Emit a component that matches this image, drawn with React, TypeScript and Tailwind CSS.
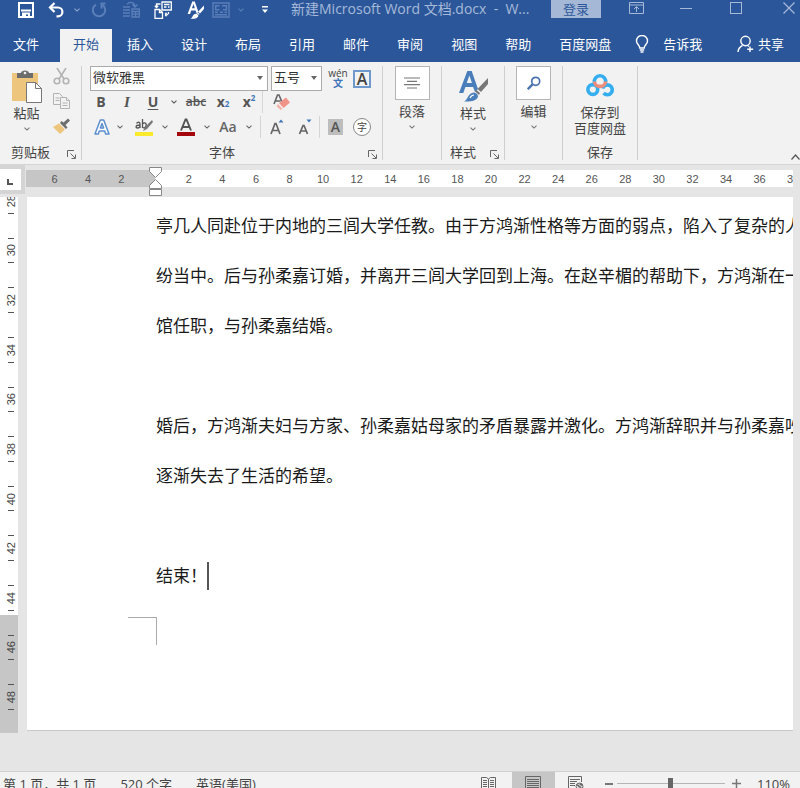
import type { ReactNode } from "react";
import clsx from "clsx";

const TABS = ["插入", "设计", "布局", "引用", "邮件", "审阅", "视图", "帮助", "百度网盘"];

const LEFT_MARKS = [6, 4, 2];
const RIGHT_MARKS = Array.from({ length: 19 }, (_, i) => (i + 1) * 2);
const SIDE_MARKS = Array.from({ length: 11 }, (_, i) => 28 + i * 2);

const LINES = [
  "亭几人同赴位于内地的三闾大学任教。由于方鸿渐性格等方面的弱点，陷入了复杂的人际",
  "纷当中。后与孙柔嘉订婚，并离开三闾大学回到上海。在赵辛楣的帮助下，方鸿渐在一家",
  "馆任职，与孙柔嘉结婚。",
  "",
  "婚后，方鸿渐夫妇与方家、孙柔嘉姑母家的矛盾暴露并激化。方鸿渐辞职并与孙柔嘉吵",
  "逐渐失去了生活的希望。",
  "",
];

function Chevron({ className }: { className?: string }) {
  return (
    <svg viewBox="0 0 6 4" className={clsx("h-1 w-1.5 shrink-0", className)} fill="none" stroke="currentColor" strokeWidth="1.1">
      <path d="M.5 .7 3 3.1 5.5 .7" />
    </svg>
  );
}

function Icon({ label, className, children }: { label: string; className?: string; children: ReactNode }) {
  return (
    <button type="button" aria-label={label} className={clsx("flex shrink-0 items-center justify-center", className)}>
      {children}
    </button>
  );
}

function BrushA({ className, letter, brush }: { className?: string; letter: string; brush: string }) {
  return (
    <svg viewBox="0 0 30 32" className={className}>
      <path d="M1 23 9.300 1h4.400L20 19l-3 3-1.900-5H7.400l-2.100 6zM8.700 13h5.200L11.400 5.500z" fill={letter} />
      <path d="M30 8v6l-7 8-3.500-3z" fill={brush} />
      <path d="m18.500 20 3.500 3-1 2-4-3.500z" fill={brush} />
      <path d="M16 22.500c2 .2 4 2 4 4-1 4.500-8 5.500-14 5 4-1.500 3.500-8.500 10-9z" fill={letter} />
      <path d="M12 28c1-2 2-3 4-3" stroke="#fff" strokeWidth="1.200" fill="none" />
    </svg>
  );
}

function TitleBar() {
  return (
    <header className="flex h-[29px] shrink-0 items-start text-white">
      <div className="flex h-[19px] items-center pl-2.5">
        <Icon label="保存" className="w-8">
          <svg viewBox="0 0 16 16" className="size-4" fill="none" stroke="currentColor" strokeWidth="2">
            <path d="M1 1h14v14H1z" />
            <path d="M3 8.500h10" />
            <path d="M5 15v-3.500h6V15" />
            <path d="M7 12v3" />
          </svg>
        </Icon>
        <Icon label="撤消" className="w-7">
          <svg viewBox="0 0 16 16" className="size-4" fill="none" stroke="currentColor" strokeWidth="2.200">
            <path d="M6.500 1 2 5.500 6.500 10" />
            <path d="M2 5.500h8a4.200 4.200 0 0 1 0 8.800H8.500" />
          </svg>
        </Icon>
        <Icon label="撤消选项" className="w-[13px] text-[#8fa8d0]">
          <Chevron />
        </Icon>
        <Icon label="重复" className="w-8 text-[#5a7fb9]">
          <svg viewBox="0 0 16 16" className="size-4" fill="none" stroke="currentColor" strokeWidth="2">
            <path d="M5 2.600a6.200 6.200 0 1 0 6.500.3" />
            <path d="M14.500 1.500h-4v5" />
          </svg>
        </Icon>
        <Icon label="粘贴列表" className="w-8 text-[#5a7fb9]">
          <svg viewBox="0 0 17 17" className="size-[17px]" fill="none" stroke="currentColor" strokeWidth="1.300">
            <path d="M4 3.500C6 .5 11 .5 12 5M9.500 3.500 12 6l2.500-2.500" />
            <path d="M0 6h7M0 9h7M0 12h7M0 15h7" />
            <path d="M9 8h7.300v8H9zM9 10.500h7M12.600 10.500V16M9 13.200h7" />
          </svg>
        </Icon>
        <Icon label="切换窗口" className="w-8">
          <svg viewBox="0 0 18 18" className="size-[18px]" fill="none" stroke="currentColor" strokeWidth="1.300">
            <path d="M1 8.500h4.500l3 3V17.300H1z" />
            <path d="M5.500 8.500V11.500h3" />
            <path d="M8 1h9.300v8H8z" />
            <path d="M10 3.500h5.500M10 6h2.500M14 6h1.500" />
            <path d="M6.500 3H2.500v3M.8 4.700l1.700 1.800 1.700-1.800" />
            <path d="M14.500 11v2.500h-3.500M12.500 11.800 10.800 13.500l1.700 1.700" strokeDasharray="2 .8" />
          </svg>
        </Icon>
        <Icon label="样式" className="w-8">
          <BrushA letter="#fff" brush="#fff" className="h-[18px] w-[17px]" />
        </Icon>
        <Icon label="图片" className="w-5 text-[#5a7fb9]">
          <svg viewBox="0 0 18 16" className="h-4 w-[18px]" fill="none" stroke="currentColor" strokeWidth="1.400">
            <path d="M1 1h16v14H1z" />
            <path d="M7.500 3.700H3.700v4H7.500M10 3.700h4.500v4H11M3 10.300h3M8 10.300h3M12.500 10.300H15M3 12.800h12" />
          </svg>
        </Icon>
        <Icon label="图片选项" className="w-5 text-[#5a7fb9]">
          <Chevron />
        </Icon>
        <Icon label="自定义快速访问工具栏" className="w-7">
          <svg viewBox="0 0 8 8" className="size-2" fill="currentColor">
            <path d="M1 0h6v1.500H1zM1 3.500h6L4 7z" />
          </svg>
        </Icon>
      </div>
      <h1 className="min-w-0 flex-1 truncate pl-3 text-[14px] leading-[18px] whitespace-pre text-[#a6b9d9]">
        新建Microsoft Word 文档.docx  -  W...
      </h1>
      <button type="button" className="h-[18px] w-[50px] bg-[#a5b8d6] text-[13px] leading-4 text-[#2b579a]">
        登录
      </button>
      <div className="flex h-4 items-center pl-2.5 text-[#a6b9d9]">
        <Icon label="功能区显示选项" className="w-[50px]">
          <svg viewBox="0 0 15 12" className="h-3 w-[15px]" fill="none" stroke="currentColor">
            <path d="M.5 .5h14v11H.5zM.5 3h14M7.500 10V5M5 7l2.500-2.500L10 7" />
          </svg>
        </Icon>
        <Icon label="最小化" className="w-[50px]">
          <span className="h-px w-3 bg-current" />
        </Icon>
        <Icon label="最大化" className="w-[50px]">
          <span className="size-3 border border-current" />
        </Icon>
        <Icon label="关闭" className="w-[39px] pl-4">
          <svg viewBox="0 0 12 12" className="size-3" fill="none" stroke="currentColor" strokeWidth="1.200">
            <path d="m.5 .5 11 11M11.500 .5l-11 11" />
          </svg>
        </Icon>
      </div>
    </header>
  );
}

function Tabs() {
  return (
    <nav className="flex h-[33px] shrink-0 items-stretch text-[13px] leading-5 text-white">
      <button type="button" className="mr-2 px-[13px] pb-1">
        文件
      </button>
      <div className="flex gap-0.5">
        <button type="button" className="bg-[#f2f2f2] px-[13px] pb-1 text-[#2b579a]">
          开始
        </button>
        {TABS.map((tab) => (
          <button type="button" key={tab} className="px-[13px] pb-1">
            {tab}
          </button>
        ))}
      </div>
      <button type="button" className="flex items-center gap-3.5 pb-1 pl-[11px]">
        <svg viewBox="0 0 14 18" className="h-[18px] w-3.5" fill="none" stroke="currentColor" strokeWidth="1.400">
          <path d="M4.800 13c0-3-3.300-3.500-3.300-7a5.500 5.500 0 0 1 11 0c0 3.500-3.300 4-3.300 7z" />
          <path d="M4.800 15h4.400M5.500 17h3" />
        </svg>
        告诉我
      </button>
      <button type="button" className="ml-auto flex items-center gap-1 pr-4 pb-1">
        <svg viewBox="0 0 17 18" className="h-[18px] w-[17px]" fill="none" stroke="currentColor" strokeWidth="1.400">
          <circle cx="8.500" cy="6" r="4.700" />
          <path d="M1 17c.2-3.500 2-5.300 4.500-6.700M10.500 10.500l1.500 1M13 11.500v5.500M10.200 14.300h6" />
        </svg>
        共享
      </button>
    </nav>
  );
}

function Group({ label, width, launcher, children }: { label?: string; width: string; launcher?: boolean; children: ReactNode }) {
  return (
    <section className={clsx("flex shrink-0 flex-col border-r border-[#cfcfcf]", width)}>
      <div className="flex flex-1 flex-col">{children}</div>
      <footer className="flex h-[15px] items-center">
        <span className="flex-1 text-center leading-[15px] whitespace-nowrap">{label}</span>
        {launcher && (
          <Icon label={`${label}设置`} className="w-5 pt-1">
            <svg viewBox="0 0 9 9" className="size-[9px]" fill="none" stroke="#666">
              <path d="M.5 7V.5H7M3.500 3.500 8 8M8.500 4.500v4h-4" />
            </svg>
          </Icon>
        )}
      </footer>
    </section>
  );
}

function ClipboardGroup() {
  return (
    <Group label="剪贴板" width="w-[82px]" launcher>
      <div className="flex justify-between pr-[11px] pl-[11px]">
        <button type="button" className="flex flex-col items-center pt-1">
          <svg viewBox="0 0 31 33" className="h-[33px] w-[31px]">
            <path d="M1 3h26v28H1z" fill="#eec57c" />
            <path d="M6 3h4c0-3.500 8-3.500 8 0h4v5H6z" fill="#6d6d6d" />
            <circle cx="14" cy="3" r="1.300" fill="#f2f2f2" />
            <path d="M15.500 12.500h9l6 6v14h-15z" fill="#fff" stroke="#777" />
            <path d="M24.500 12.500v6h6" fill="none" stroke="#777" />
          </svg>
          <span className="leading-5">粘贴</span>
          <Chevron className="mt-1 text-[#777]" />
        </button>
        <div className="flex flex-col gap-2 pt-0.5">
          <Icon label="剪切" className="h-[17px]">
            <svg viewBox="0 0 17 17" className="size-[17px]" fill="none" stroke="#b3b3b3" strokeWidth="1.600">
              <path d="M4 0l7 11M13 0 6 11" />
              <circle cx="4" cy="13" r="2.800" />
              <circle cx="13" cy="13" r="2.800" />
            </svg>
          </Icon>
          <Icon label="复制" className="h-[17px]">
            <svg viewBox="0 0 17 17" className="size-[17px]" fill="#f2f2f2" stroke="#b3b3b3">
              <path d="M.5 .5h6l3 3v8h-9z" />
              <path d="M2.500 5h4M2.500 7.500h4" />
              <path d="M7.500 4.500h6l3 3v8h-9z" />
              <path d="M13.500 4.500v3h3M9.500 10h5M9.500 12.500h5" />
            </svg>
          </Icon>
          <Icon label="格式刷" className="h-[17px]">
            <svg viewBox="0 0 17 17" className="size-[17px]">
              <path d="m0 9 6-3.500 6 6L7 16z" fill="#eec57c" />
              <path d="m7 5 6 6 1.500-1.500-2-2.500L17 2.500 15 .5l-4.500 4-2-1.500z" fill="#6d6d6d" />
            </svg>
          </Icon>
        </div>
      </div>
    </Group>
  );
}

function Picker({ id, label, value, width }: { id: string; label: string; value: string; width: string }) {
  return (
    <div className={clsx("relative h-[25px]", width)}>
      <label htmlFor={id} className="sr-only">
        {label}
      </label>
      <select id={id} className="size-full appearance-none border border-[#ababab] bg-white pb-1 pl-0.5 text-[13px] leading-5 text-[#333]">
        <option>{value}</option>
      </select>
      <svg viewBox="0 0 6 4" className="pointer-events-none absolute top-2.5 right-[5px] h-1 w-1.5" fill="#666">
        <path d="M0 0h6L3 4z" />
      </svg>
    </div>
  );
}

function Divider() {
  return <span className="h-[22px] w-px shrink-0 bg-[#d5d5d5]" />;
}

function FontGroup() {
  return (
    <Group label="字体" width="w-[301px]" launcher>
      <div className="flex h-[25px] items-center gap-[3px] pl-2">
        <Picker id="font" label="字体名称" value="微软雅黑" width="w-[178px]" />
        <Picker id="size" label="字号" value="五号" width="w-[51px]" />
        <Icon label="拼音指南" className="ml-0.5 h-6 w-[22px] flex-col">
          <span className="text-[10px] leading-[10px]">wén</span>
          <span className="text-[10px] leading-[11px] font-bold text-[#3e74b8]">文</span>
        </Icon>
        <Icon label="字符边框" className="ml-px size-[18px] border-2 border-[#6f98cc] text-base leading-4 font-semibold">
          A
        </Icon>
      </div>
      <div className="flex h-[22px] items-center pl-1.5 text-[14px] leading-5 font-bold text-[#555]">
        <Icon label="加粗" className="w-[26px]">B</Icon>
        <Icon label="倾斜" className="w-[26px] font-['Liberation_Serif'] text-[15px] italic">I</Icon>
        <Icon label="下划线" className="w-[26px] underline underline-offset-2">U</Icon>
        <Icon label="下划线选项" className="w-4">
          <Chevron />
        </Icon>
        <Icon label="删除线" className="w-7 text-xs font-semibold line-through">abc</Icon>
        <Icon label="下标" className="w-[26px]">
          x<sub className="text-[8px] text-[#3e74b8]">2</sub>
        </Icon>
        <Icon label="上标" className="w-[26px]">
          x<sup className="text-[8px] text-[#3e74b8]">2</sup>
        </Icon>
        <Divider />
        <Icon label="清除格式" className="w-9">
          <svg viewBox="0 0 17 17" className="size-[17px]">
            <path d="M1 10 4.500 1h1.500L9 8M2.500 7h5" fill="none" stroke="#666" strokeWidth="1.600" />
            <path d="m6 9 7-5.500 4 5-6.500 5.500z" fill="#f0948a" />
            <path d="m5 10 4.500 4.800L7.500 16 3.500 12z" fill="#f4b3aa" />
          </svg>
        </Icon>
      </div>
      <div className="flex h-7 items-center pl-2 text-[#666]">
        <Icon label="文本效果" className="w-6">
          <svg viewBox="0 0 16 16" className="size-4" fill="#fff" stroke="#5b8fce" strokeWidth="1.500" strokeLinejoin="round">
            <path d="M1 15 6.300 1h3.400L15 15h-3.300l-1-3H5.300l-1 3zM6.300 9h3.400L8 4.500z" />
          </svg>
        </Icon>
        <Icon label="文本效果选项" className="w-3">
          <Chevron />
        </Icon>
        <Icon label="突出显示" className="w-9">
          <svg viewBox="0 0 18 18" className="size-[18px]">
            <path d="M0 14h18v4H0z" fill="#fbe92e" />
            <path d="M1.500 5.500C3 3.500 5 4 5 6v4M5 7C0 7 .5 10 2.500 10 4 10 5 9 5 8M7.500 1v9M7.500 6c2-2.500 4.500-.5 3.500 2-.8 2-2.500 2.500-3.500 1" fill="none" stroke="#555" strokeWidth="1.300" />
            <path d="M17 2 10 9l-2 4 4-2 6-7z" fill="#777" />
          </svg>
        </Icon>
        <Icon label="突出显示选项" className="w-1.5">
          <Chevron />
        </Icon>
        <Icon label="字体颜色" className="w-9">
          <svg viewBox="0 0 18 18" className="size-[18px]">
            <path d="M4 12.500 8.500 1.500h1l4.500 11M5.500 9h7" fill="none" stroke="#555" strokeWidth="1.900" />
            <path d="M0 14h18v4H0z" fill="#a4070c" />
          </svg>
        </Icon>
        <Icon label="字体颜色选项" className="w-1.5">
          <Chevron />
        </Icon>
        <Icon label="更改大小写" className="w-9 text-sm font-semibold">Aa</Icon>
        <Icon label="更改大小写选项" className="mr-2 w-1.5">
          <Chevron />
        </Icon>
        <Divider />
        <Icon label="增大字号" className="w-8">
          <svg viewBox="0 0 14 16" className="h-4 w-3.5">
            <path d="M1 15 5 4.500h1L10 15M2.500 11.500h6" fill="none" stroke="#666" strokeWidth="1.700" />
            <path d="M8.500 3.500h5L11 .5z" fill="#3e74b8" />
          </svg>
        </Icon>
        <Icon label="减小字号" className="mr-0.5 w-6">
          <svg viewBox="0 0 14 16" className="h-4 w-3.5">
            <path d="M1.500 15 5 6.500h1L9.500 15M3 12h5.500" fill="none" stroke="#666" strokeWidth="1.700" />
            <path d="M8.500 .5h5L11 3.500z" fill="#3e74b8" />
          </svg>
        </Icon>
        <Divider />
        <Icon label="字符底纹" className="ml-2 h-4 w-[15px] bg-[#bdbdbd] text-sm leading-4 font-semibold text-[#555]">A</Icon>
        <Icon label="带圈字符" className="ml-2.5 size-[18px] rounded-full border border-[#888] bg-white text-[10px] leading-4 text-[#444]">字</Icon>
      </div>
    </Group>
  );
}

function BoxedButton({ label, children }: { label: string; children: ReactNode }) {
  return (
    <button type="button" className="flex flex-col items-center">
      <span className="flex h-[34px] w-[35px] items-center justify-center border border-[#b5b5b5] bg-white">{children}</span>
      <span className="mt-px leading-5">{label}</span>
      <Chevron className="mt-1 text-[#777]" />
    </button>
  );
}

function Ribbon() {
  return (
    <div className="flex h-[103px] shrink-0 border-b border-[#d5d5d5] bg-[#f2f2f2] pt-1 pb-1 text-[13px] text-[#444]">
      <ClipboardGroup />
      <FontGroup />
      <Group width="w-[59px]">
        <BoxedButton label="段落">
          <svg viewBox="0 0 16 12" className="h-3 w-4" stroke="#777" strokeWidth="1.200">
            <path d="M0 1h16M3 4.300h10M0 7.600h16M3 11h10" />
          </svg>
        </BoxedButton>
      </Group>
      <Group label="样式" width="w-[63px]" launcher>
        <button type="button" className="flex flex-col items-center pt-1">
          <BrushA letter="#4a7ebb" brush="#777" className="h-8 w-[30px]" />
          <span className="mt-px leading-5">样式</span>
          <Chevron className="mt-1 text-[#777]" />
        </button>
      </Group>
      <Group width="w-[58px]">
        <BoxedButton label="编辑">
          <svg viewBox="0 0 14 14" className="size-3.5" fill="none" stroke="#4a72b0" strokeWidth="1.700">
            <circle cx="8.700" cy="5.300" r="4" />
            <path d="M5.600 8.400 .8 13.200" strokeWidth="2.300" />
          </svg>
        </BoxedButton>
      </Group>
      <Group label="保存" width="w-[75px]">
        <button type="button" className="flex flex-col items-center pt-[7px]">
          <svg viewBox="0 0 28 24" className="h-6 w-7" fill="none" strokeWidth="3.600">
            <circle cx="6.800" cy="16.500" r="4.900" stroke="#35aef0" />
            <path d="M17.600 20a4.900 4.900 0 1 0 -1-4.500" stroke="#35aef0" />
            <path d="M8.400 9.500a5.700 5.700 0 1 1 11.200 0" stroke="#35aef0" />
            <path d="M8.400 8.500c.4 6.500 10.800 6.500 11.200 0" stroke="#ee8d7b" />
          </svg>
          <span className="mt-[7px] leading-4">
            保存到
            <br />
            百度网盘
          </span>
        </button>
      </Group>
      <div className="flex flex-1 items-end justify-end">
        <Icon label="折叠功能区">
          <svg viewBox="0 0 9 6" className="h-1.5 w-[9px]" fill="none" stroke="#555" strokeWidth="1.200">
            <path d="M.5 5.500 4.500 1l4 4.500" />
          </svg>
        </Icon>
      </div>
    </div>
  );
}

function TopRuler() {
  return (
    <div className="flex h-8 shrink-0 items-start pr-[7px] font-['Liberation_Sans'] text-[11px] leading-[18px] text-[#555]">
      <button type="button" aria-label="制表符" className="mr-px h-[29px] w-[25px] border-t-4 border-r-4 border-b-4 border-[#d4d4d4] bg-white pt-1 pl-[7px]">
        <svg viewBox="0 0 6 6" className="size-1.5" fill="none" stroke="#555" strokeWidth="2">
          <path d="M1 0v5h5" />
        </svg>
      </button>
      <div className="relative mt-[5px] flex h-[17px] min-w-0 flex-1 bg-white">
        <div className="grid w-[129px] shrink-0 grid-cols-3 bg-[#c6c6c6] pr-[17px] pl-3 text-center">
          {LEFT_MARKS.map((n) => (
            <span key={n}>{n}</span>
          ))}
        </div>
        <div className="min-w-0 flex-1 overflow-hidden">
          <div className="-mr-[17px] grid grid-cols-[repeat(19,minmax(0,1fr))] pl-[17px] text-center">
            {RIGHT_MARKS.map((n) => (
              <span key={n}>{n}</span>
            ))}
          </div>
        </div>
        <svg viewBox="0 0 13 30" className="absolute -top-[3px] left-[123px] h-[30px] w-[13px]" fill="#fff" stroke="#888">
          <path d="M.5 .5h12v4l-6 6-6-6z" />
          <path d="m6.500 12.500 6 6v3H.5v-3z" />
          <path d="M.5 22.500h12v6H.5z" />
        </svg>
      </div>
    </div>
  );
}

function SideRuler() {
  return (
    <div className="w-[18px] shrink-0 overflow-hidden bg-[linear-gradient(to_bottom,#fff_418px,#c6c6c6_418px)] pb-[11px] font-['Liberation_Sans'] text-[11px] leading-[14px] text-[#444]">
      <div className="-mt-[21px] grid h-[546px] auto-rows-fr">
        {SIDE_MARKS.map((n) => (
          <div key={n} className="flex flex-col items-center justify-between py-3 pl-1">
            <span className="h-px w-1.5 bg-[#555]" />
            <span className="rotate-180 [writing-mode:vertical-rl]">{n}</span>
            <span className="h-px w-1.5 bg-[#555]" />
          </div>
        ))}
      </div>
    </div>
  );
}

function Page() {
  return (
    <article className="mb-0.5 min-w-0 flex-1 overflow-hidden border-b border-[#c9c9c9] bg-white pt-1 pb-[85px] pl-[129px] text-[17px] leading-[50px] text-[#1a1a1a]">
      {LINES.map((line, i) => (
        <p key={i} className="h-[50px] whitespace-nowrap">
          {line}
        </p>
      ))}
      <p className="flex h-[50px] items-center">
        结束！
        <span className="h-7 w-0.5 bg-[#555]" />
      </p>
      <div className="mt-4 -ml-7 h-7 w-[29px] border-t border-r border-[#ababab]" />
    </article>
  );
}

function StatusBar() {
  return (
    <footer className="flex h-6 shrink-0 items-center border-t border-[#cfcfcf] bg-[#f2f2f2] pr-2.5 pl-[3px] text-[13px] leading-6 text-[#444]">
      <span>第 1 页，共 1 页</span>
      <span className="ml-6">520 个字</span>
      <span className="ml-6">英语(美国)</span>
      <div className="ml-auto flex items-center">
        <Icon label="阅读视图" className="h-6 w-[46px]">
          <svg viewBox="0 0 15 15" className="size-[15px]" fill="none" stroke="#666">
            <path d="M.5 1.500h5l2 1.500 2-1.500h5v11h-5l-2 1.500-2-1.500h-5zM7.500 3v11M2 4.500h4M2 6.500h4M2 8.500h4M2 10.500h4M9 4.500h4M9 6.500h4M9 8.500h4M9 10.500h4" />
          </svg>
        </Icon>
        <Icon label="页面视图" className="h-6 w-[43px] bg-[#c6c6c6]">
          <svg viewBox="0 0 16 15" className="h-[15px] w-4" fill="none" stroke="#666">
            <path d="M.5 .5h15v14H.5zM2 3.500h12M2 5.500h12M2 7.500h12M2 9.500h12M2 11.500h12" />
          </svg>
        </Icon>
        <Icon label="Web 版式视图" className="h-6 w-[43px]">
          <svg viewBox="0 0 16 15" className="h-[15px] w-4" fill="none" stroke="#666">
            <path d="M8 12.500H.5V.5h13V6M2 3.500h10M2 5.500h7M2 7.500h5M2 9.500h5" />
            <circle cx="11.500" cy="10.500" r="3.500" fill="#ddd" />
            <path d="M9 9c2 0 2 2 3 2s1 2 0 3M12 7.500c0 1.500 1.500 1 2.500 2" strokeWidth="1.500" />
          </svg>
        </Icon>
        <Icon label="缩小" className="ml-[3px] size-4">
          <span className="h-0.5 w-2 bg-[#777]" />
        </Icon>
        <input
          type="range"
          aria-label="显示比例"
          min={10}
          max={210}
          defaultValue={110}
          className="mr-1 h-4 w-[108px] appearance-none bg-[linear-gradient(#b5b5b5,#b5b5b5)] bg-[length:100%_1px] bg-center bg-no-repeat [&::-webkit-slider-thumb]:h-3 [&::-webkit-slider-thumb]:w-[5px] [&::-webkit-slider-thumb]:appearance-none [&::-webkit-slider-thumb]:bg-[#666]"
        />
        <Icon label="放大" className="size-4">
          <svg viewBox="0 0 9 9" className="size-[9px]" stroke="#777" strokeWidth="1.500">
            <path d="M4.500 0v9M0 4.500h9" />
          </svg>
        </Icon>
        <span className="ml-3">110%</span>
      </div>
    </footer>
  );
}

export default function App() {
  return (
    <div className="flex h-screen flex-col overflow-hidden bg-[#2b579a] font-['Open_Sans','Noto_Sans_CJK_SC',sans-serif]">
      <TitleBar />
      <Tabs />
      <Ribbon />
      <main className="shrink-0 bg-[#e5e5e5]">
        <TopRuler />
        <div className="flex gap-[9px] pr-[7px] pb-[38px]">
          <SideRuler />
          <Page />
        </div>
      </main>
      <StatusBar />
    </div>
  );
}
